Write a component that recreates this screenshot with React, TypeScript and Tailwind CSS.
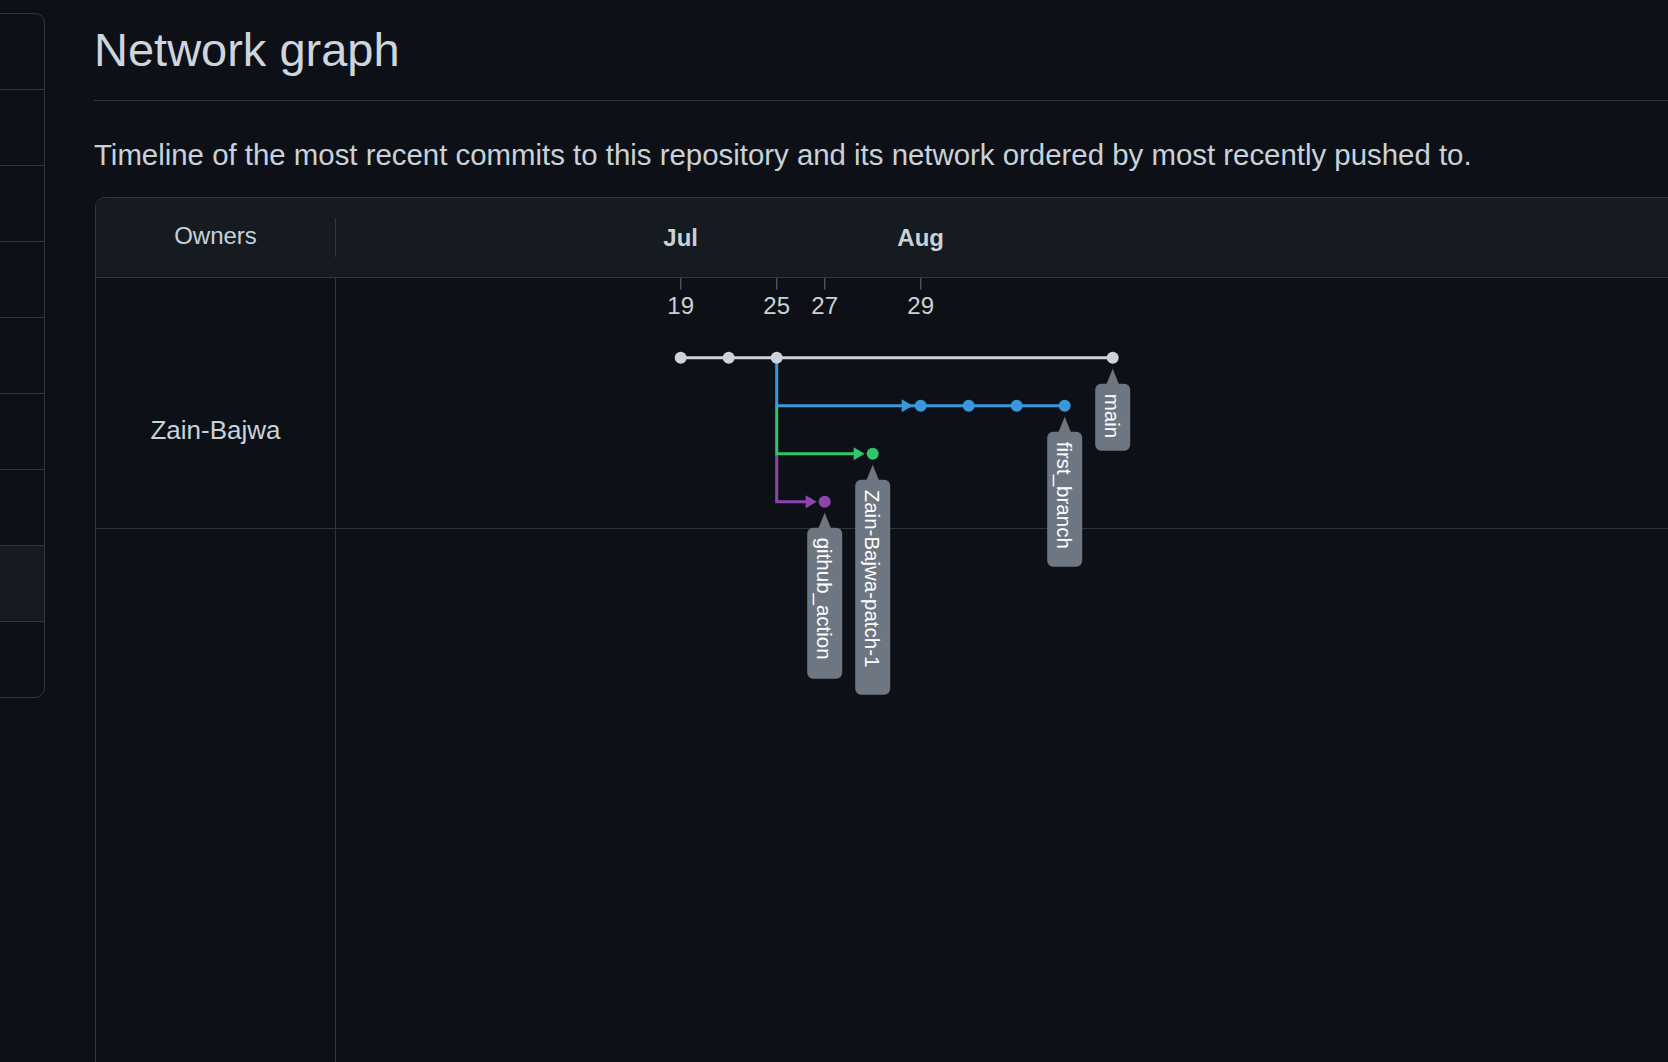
import React from "react";

type Branch = {
  name: string;
  color: string;
  col: number;
  row: number;
  labelHeight: number;
};

const COL0 = 344.7;
const STEP = 48;
const ROW0 = 79.7;
const BRANCH_X = COL0 + STEP * 2;

const cx = (i: number) => COL0 + STEP * i;
const cy = (j: number) => ROW0 + STEP * j;

const MAIN = "#cdd3da";
const BLUE = "#3a96dd";
const GREEN = "#2ec56b";
const PURPLE = "#8e44ad";

const ticks = [
  { col: 0, label: "19" },
  { col: 2, label: "25" },
  { col: 3, label: "27" },
  { col: 5, label: "29" },
];

const months = [
  { col: 0, label: "Jul" },
  { col: 5, label: "Aug" },
];

const labels: Branch[] = [
  { name: "main", color: MAIN, col: 9, row: 0, labelHeight: 67 },
  { name: "first_branch", color: BLUE, col: 8, row: 1, labelHeight: 135 },
  { name: "Zain-Bajwa-patch-1", color: GREEN, col: 4, row: 2, labelHeight: 215 },
  { name: "github_action", color: PURPLE, col: 3, row: 3, labelHeight: 151 },
];

//======= Arrow head pointing at a commit =======//
function Arrow({ col, row, color }: { col: number; row: number; color: string }) {
  const tip = cx(col) - 8;
  const y = cy(row);
  return (
    <polygon
      points={`${tip - 11},${y - 6.5} ${tip},${y} ${tip - 11},${y + 6.5}`}
      fill={color}
    />
  );
}

//======= Branch name tag below its head commit =======//
function BranchLabel({ branch }: { branch: Branch }) {
  const x = cx(branch.col);
  const y = cy(branch.row);
  const top = y + 26;
  return (
    <g>
      <polygon
        points={`${x},${y + 11} ${x + 6.5},${top + 1} ${x - 6.5},${top + 1}`}
        fill="#6e7681"
      />
      <rect
        x={x - 17.5}
        y={top}
        width={35}
        height={branch.labelHeight}
        rx={6}
        fill="#6e7681"
      />
      <text
        transform={`translate(${x} ${top + 10}) rotate(90)`}
        dominantBaseline="central"
        fontSize={20.5}
        fill="#ffffff"
        fontFamily="'Liberation Sans', Arial, sans-serif"
      >
        {branch.name}
      </text>
    </g>
  );
}

function NetworkCanvas() {
  return (
    <svg
      className="pointer-events-none absolute left-0 top-0 overflow-visible"
      width={1400}
      height={700}
    >
      {ticks.map((tick) => (
        <g key={tick.label}>
          <line
            x1={cx(tick.col)}
            x2={cx(tick.col)}
            y1={0}
            y2={11.5}
            stroke="#4b535d"
            strokeWidth={1.5}
          />
          <text
            x={cx(tick.col)}
            y={36}
            textAnchor="middle"
            fontSize={24}
            fill="#c9d1d9"
            fontFamily="'Liberation Sans', Arial, sans-serif"
          >
            {tick.label}
          </text>
        </g>
      ))}

      {/* branch lines */}
      <path
        d={`M${BRANCH_X} ${cy(2)} V${cy(3)} H${cx(3) - 12}`}
        stroke={PURPLE}
        strokeWidth={3}
        fill="none"
      />
      <path
        d={`M${BRANCH_X} ${cy(1)} V${cy(2)} H${cx(4) - 12}`}
        stroke={GREEN}
        strokeWidth={3}
        fill="none"
      />
      <path
        d={`M${BRANCH_X} ${cy(0)} V${cy(1)} H${cx(8)}`}
        stroke={BLUE}
        strokeWidth={3}
        fill="none"
      />
      <line
        x1={cx(0)}
        x2={cx(9)}
        y1={cy(0)}
        y2={cy(0)}
        stroke={MAIN}
        strokeWidth={3}
      />

      <Arrow col={3} row={3} color={PURPLE} />
      <Arrow col={4} row={2} color={GREEN} />
      <Arrow col={5} row={1} color={BLUE} />

      {[0, 1, 2, 9].map((i) => (
        <circle key={`m${i}`} cx={cx(i)} cy={cy(0)} r={6} fill={MAIN} />
      ))}
      {[5, 6, 7, 8].map((i) => (
        <circle key={`b${i}`} cx={cx(i)} cy={cy(1)} r={6} fill={BLUE} />
      ))}
      <circle cx={cx(4)} cy={cy(2)} r={6} fill={GREEN} />
      <circle cx={cx(3)} cy={cy(3)} r={6} fill={PURPLE} />

      {labels.map((branch) => (
        <BranchLabel key={branch.name} branch={branch} />
      ))}
    </svg>
  );
}

export default function App() {
  return (
    <div className="flex h-screen w-screen overflow-hidden bg-[#0d1117] font-['Liberation_Sans',Arial,sans-serif] text-[#c9d1d9]">
      {/* side menu, mostly scrolled off to the left */}
      <aside className="-ml-[200px] mt-[13px] w-[245px] shrink-0 self-start overflow-hidden rounded-[10px] border border-[#30363d]">
        <div className="flex flex-col">
          {Array.from({ length: 9 }).map((_, index) => (
            <div
              key={index}
              className={
                index === 0
                  ? "h-[75px]"
                  : index === 7
                    ? "h-[76px] border-t border-[#30363d] bg-[#161b22]"
                    : "h-[76px] border-t border-[#30363d]"
              }
            />
          ))}
        </div>
      </aside>

      <main className="ml-[49px] w-[1700px] shrink-0">
        <div className="mt-[20px] border-b border-[#30363d] pb-[21px]">
          <h1 className="text-[47px] font-normal leading-[59px] text-[#cdd5de]">
            Network graph
          </h1>
        </div>

        <p className="mt-[32px] text-[29.4px] leading-[44px]">
          Timeline of the most recent commits to this repository and its network
          ordered by most recently pushed to.
        </p>

        <section className="ml-px mt-[20px] flex h-[900px] flex-col rounded-t-[10px] border border-[#30363d]">
          <div className="flex h-[80px] items-center rounded-t-[10px] border-b border-[#30363d] bg-[#161b22]">
            <div className="flex w-[239px] justify-center pb-[3px] text-[24px]">
              Owners
            </div>
            <div className="h-[39px] w-px bg-[#30363d]" />
            <div className="relative h-full flex-1">
              {months.map((month) => (
                <span
                  key={month.label}
                  className="absolute top-1/2 -translate-x-1/2 -translate-y-1/2 text-[24px] font-bold"
                  style={{ left: cx(month.col) }}
                >
                  {month.label}
                </span>
              ))}
            </div>
          </div>

          <div className="flex flex-1">
            <div className="flex w-[240px] flex-col border-r border-[#30363d]">
              <div className="flex h-[251px] justify-center border-b border-[#30363d] pt-[137px] text-[26px] leading-[30px]">
                Zain-Bajwa
              </div>
              <div className="flex-1" />
            </div>
            <div className="relative flex flex-1 flex-col">
              <div className="h-[251px] border-b border-[#30363d]" />
              <div className="flex-1" />
              <NetworkCanvas />
            </div>
          </div>
        </section>
      </main>
    </div>
  );
}
